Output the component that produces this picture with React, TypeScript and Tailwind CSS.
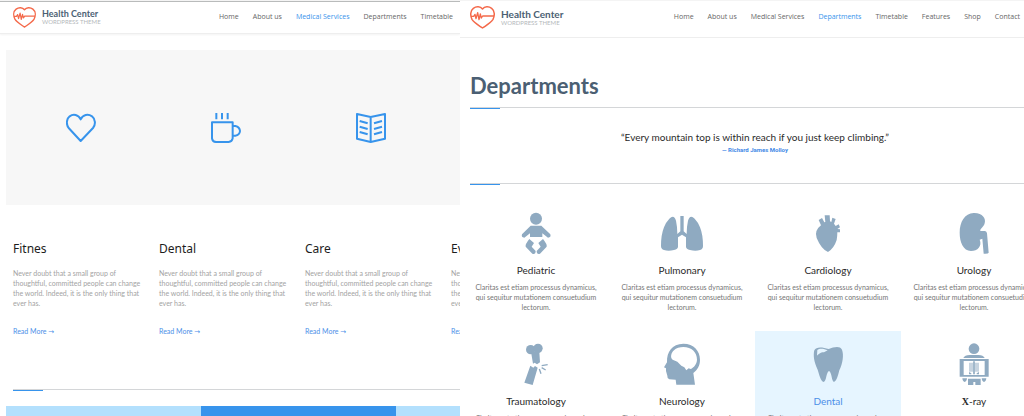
import type { ReactNode } from "react";

function Logo({ large = false }: { large?: boolean }) {
  return (
    <a href="#home" className="flex shrink-0 items-center gap-[6px]">
      <svg
        viewBox="0 0 75 69"
        fill="none"
        stroke="#f4694a"
        strokeWidth="4.5"
        strokeLinejoin="round"
        className={large ? "h-[23px] w-[25px]" : "h-[21px] w-[23px]"}
        aria-hidden="true"
      >
        <path d="M37.500 66 C26 58 12 50 6 40 C0 28 1 14 10 7 C19 0 31 1 37.500 9 C44 1 56 0 65 7 C74 14 75 28 69 40 C63 50 49 58 37.500 66 Z" />
        <path d="M3 31 H11 L15 25 L18 38 L23 20 L27 41 L31 24 L34 36 L38 30 H72" strokeWidth="4" />
      </svg>
      <span className="flex flex-col font-[Lato,sans-serif]">
        <span className={large ? "text-[10px] leading-[10px] font-bold text-[#4b5f73]" : "text-[9px] leading-[9px] font-bold text-[#4b5f73]"}>
          Health Center
        </span>
        <span className="text-[6px] leading-[8px] text-[#b4b8bb]">WORDPRESS THEME</span>
      </span>
    </a>
  );
}

function Nav({ items, active }: { items: string[]; active: string }) {
  return (
    <nav className="ml-auto flex gap-[14px] pb-[2px] text-[7px] leading-[10px] whitespace-nowrap">
      {items.map((item) => (
        <a key={item} href="#nav" className={item === active ? "text-[#3794ec]" : "text-[#666666]"}>
          {item}
        </a>
      ))}
    </nav>
  );
}

function Divider() {
  return (
    <div className="border-t border-[#d4d6d8]">
      <div className="h-px w-[30px] bg-[#3794ec]" />
    </div>
  );
}

function LineIcon({ children }: { children: ReactNode }) {
  return (
    <svg viewBox="0 0 90 90" fill="none" stroke="#3794ec" strokeWidth="6" strokeLinejoin="round" className="size-[30px]" aria-hidden="true">
      {children}
    </svg>
  );
}

const featureIcons = [
  <LineIcon key="heart">
    <path d="M44 84 L8 45 C0 34 1 18 11 10 C22 2 37 5 44 19 C51 5 66 2 78 10 C88 18 90 34 81 45 Z" />
  </LineIcon>,
  <LineIcon key="cup">
    <path d="M3 28 H65 V76 Q63 86 53 87 H15 Q4 86 3 76 Z M65 39 H73 Q86 42 87 54 Q86 66 73 68 H65 M16 0 V19 M33 0 V19 M50 0 V19" />
  </LineIcon>,
  <LineIcon key="book">
    <path d="M44 12 L3 3 V77 L44 87 L87 77 V3 Z M44 12 V87" />
    <path d="M11 24 L35 31 M11 41 L35 48 M11 57 L35 64 M78 24 L54 31 M78 41 L54 48 M78 57 L54 64" />
  </LineIcon>,
];

const features = ["Fitnes", "Dental", "Care", "Event"];

function MedicalServices() {
  return (
    <section className="min-w-0 overflow-hidden border-t border-[#f4f4f4]">
      <header className="flex h-[33px] items-center border-t border-b border-t-[#b9bbbb] border-b-[#eeeeee] pr-[7px] pl-[13px] shadow-[0_1px_2px_#f3f3f3]">
        <Logo />
        <Nav items={["Home", "About us", "Medical Services", "Departments", "Timetable"]} active="Medical Services" />
      </header>
      <div className="pl-[6px]">
        <div className="mt-4 grid h-[155px] auto-cols-[145px] grid-flow-col items-center justify-items-center bg-[#f7f7f7] pl-[2px]">
          {featureIcons}
        </div>
        <div className="pl-[7px]">
          <div className="grid auto-cols-[146px] grid-flow-col pt-[34px]">
            {features.map((name) => (
              <article key={name} className="pr-[14px]">
                <h2 className="font-['Noto_Sans',sans-serif] text-[12px] leading-[20px] text-[#1d1d1d]">{name}</h2>
                <p className="mt-[9px] font-[Lato,sans-serif] text-[7px] leading-[10px] text-[#a3a3a3]">
                  Never doubt that a small group of thoughtful, committed people can change the world. Indeed, it is the only thing that ever has.
                </p>
                <a href="#more" className="mt-[18px] block font-[Lato,'DejaVu_Sans',sans-serif] text-[7px] leading-[10px] text-[#4d8fe8]">
                  Read More <span className="font-['DejaVu_Sans',sans-serif]">→</span>
                </a>
              </article>
            ))}
          </div>
          <div className="mt-[52px]">
            <Divider />
          </div>
        </div>
        <div className="mt-[15px] grid h-[40px] auto-cols-[195px] grid-flow-col">
          <div className="bg-[#b3e0fd]" />
          <div className="bg-[#3794ec]" />
          <div className="bg-[#b3e0fd]" />
        </div>
      </div>
    </section>
  );
}

const departments: { name: ReactNode; id: string; box: string; art: ReactNode; highlighted?: boolean }[] = [
  {
    id: "pediatric",
    name: "Pediatric",
    box: "130 36 132 132",
    art: (
      <>
        <circle cx="196" cy="56" r="18" />
        <path d="M180 77 H212 L239 103 Q242 113 232 113 L215 100 V111 H178 V100 L161 113 Q151 113 154 103 Z" />
        <path d="M176 117 L190 129 L183 140 L195 153 Q195 164 185 161 L165 140 Q163 133 176 117 Z M217 117 L203 129 L210 140 L198 153 Q198 164 208 161 L228 140 Q230 133 217 117 Z" />
      </>
    ),
  },
  {
    id: "pulmonary",
    name: "Pulmonary",
    box: "570 36 132 132",
    art: (
      <path d="M598 56 Q612 42 618 62 Q622 80 622 102 L631 94 V48 H641 V94 L650 102 Q650 80 654 62 Q660 42 674 56 Q684 66 690 82 Q699 104 699 138 Q699 147 690 150 Q677 154 660 150 Q648 147 648 140 V112 L636 104 L624 112 V140 Q624 147 612 150 Q595 154 582 150 Q573 147 573 138 Q573 104 582 82 Q588 66 598 56 Z" />
    ),
  },
  {
    id: "cardiology",
    name: "Cardiology",
    box: "168 36 132 132",
    art: (
      <path d="M213 76 L206 60 L216 54 L223 67 L226 66 L224 46 H239 L240 64 L244 66 L247 53 L257 57 L252 71 L257 78 L266 73 L270 82 L262 87 L270 88 V97 L262 97 Q262 110 260 120 Q252 145 234 156 Q214 148 200 114 Q192 92 213 76 Z" />
    ),
  },
  {
    id: "urology",
    name: "Urology",
    box: "607 36 132 132",
    art: (
      <path d="M672 39 C698 38 710 56 705 70 C702 82 691 86 692 93 H706 Q711 94 712 100 L717 158 Q716 162 702 161 L698 116 L690 119 C698 138 684 153 664 153 C640 152 630 126 630 98 C630 66 645 40 672 39 Z" />
    ),
  },
  {
    id: "traumatology",
    name: "Traumatology",
    box: "130 54 132 132",
    art: (
      <>
        <circle cx="180" cy="74" r="14" />
        <circle cx="202" cy="70" r="14" />
        <path d="M181 80 H206 L208 112 L199 118 L192 113 L187 116 Z M179 122 L188 128 L193 123 L201 128 L186 180 L161 173 Z" />
        <path d="M213 122 L231 119 M213 128 L225 135 M206 132 L211 146" fill="none" stroke="currentColor" strokeWidth="4" />
      </>
    ),
  },
  {
    id: "neurology",
    name: "Neurology",
    box: "570 54 132 132",
    art: (
      <path
        fillRule="evenodd"
        d="M640 56 C672 56 690 78 690 104 C690 122 682 134 670 144 L675 179 H619 L617 164 L598 163 Q591 160 592 152 L588 138 L588 130 L582 127 L591 112 C590 80 606 57 640 56 Z M640 66 C630 66 618 69 612 76 C603 84 600 98 608 104 L622 110 L634 122 L643 127 L649 136 L656 130 L662 132 C672 127 680 118 681 104 C681 82 665 66 640 66 Z"
      />
    ),
  },
  {
    id: "dental",
    name: "Dental",
    highlighted: true,
    box: "168 54 132 132",
    art: (
      <path
        fillRule="evenodd"
        d="M236 72 C252 66 270 62 276 74 C282 90 278 115 268 136 C264 152 260 168 252 171 C244 168 246 142 237 138 C228 142 230 168 221 171 C212 168 208 150 203 134 C192 112 189 90 193 76 C199 64 216 66 236 72 Z M202 75 C208 69 222 70 233 76 L222 82 C210 82 206 88 201 92 Z"
      />
    ),
  },
  {
    id: "x-ray",
    name: (
      <>
        <span className="font-['Liberation_Serif',serif] font-bold">X</span>-ray
      </>
    ),
    box: "607 54 132 132",
    art: (
      <>
        <circle cx="673" cy="71" r="16" />
        <path d="M641 99 Q645 90 660 90 H686 Q701 90 705 99 Z" />
        <path fillRule="evenodd" d="M630 102 H717 V155 H630 Z M642 108 V150 H705 V108 Z" />
        <path d="M673 109 V148" fill="none" stroke="currentColor" strokeWidth="5" />
        <path d="M658 113 H670 V140 H658 Z M676 113 H688 V140 H676 Z" opacity="0.5" />
        <path d="M658 148 V141 L665 145 V148 Z M688 148 V141 L681 145 V148 Z" />
        <path d="M638 160 H652 Q651 170 645 171 Q639 170 638 160 Z M696 160 H710 Q709 170 703 171 Q697 170 696 160 Z" />
        <path d="M655 161 H693 V180 H677 V171 H671 V180 H655 Z" />
      </>
    ),
  },
];

function Departments() {
  return (
    <section className="min-w-0 overflow-hidden border-t border-[#f4f4f4]">
      <header className="flex h-[37px] items-center border-b border-[#eeeeee] pr-1 pb-[3px] pl-[10px]">
        <Logo large />
        <Nav
          items={["Home", "About us", "Medical Services", "Departments", "Timetable", "Features", "Shop", "Contact"]}
          active="Departments"
        />
      </header>
      <div className="-mr-4 pl-[10px]">
        <h1 className="pt-[34px] pb-[7px] font-[Lato,sans-serif] text-[22px] leading-[28px] font-bold text-[#4b5f73]">Departments</h1>
        <Divider />
        <figure className="pt-[21px] pb-[28px] text-center">
          <blockquote className="font-[Lato,sans-serif] text-[10px] leading-[15px] text-[#2a2a2a]">
            “Every mountain top is within reach if you just keep climbing.”
          </blockquote>
          <figcaption className="font-[Roboto,sans-serif] text-[6px] leading-[10px] font-bold text-[#3f88e6]">— Richard James Molloy</figcaption>
        </figure>
        <Divider />
      </div>
      <div className="grid grid-cols-[repeat(4,146px)] pt-[15px] pl-[3px]">
        {departments.map((d) => (
          <article
            key={d.id}
            className={
              d.highlighted
                ? "flex h-[131px] flex-col items-center bg-[#e6f5ff] px-2 pt-3 text-center text-[#4d8fe8]"
                : "flex h-[131px] flex-col items-center px-2 pt-3 text-center text-[#2a2a2a]"
            }
          >
            <svg viewBox={d.box} fill="currentColor" className="size-[44px] shrink-0 text-[#8faac1]" aria-hidden="true">
              {d.art}
            </svg>
            <h2 className="mt-[7px] font-[Lato,sans-serif] text-[10px] leading-[14px]">{d.name}</h2>
            <p className="mt-[5px] font-[Lato,sans-serif] text-[7px] leading-[10px] text-[#757575]">
              Claritas est etiam processus dynamicus, qui sequitur mutationem consuetudium lectorum.
            </p>
          </article>
        ))}
      </div>
    </section>
  );
}

export default function App() {
  return (
    <main className="grid h-screen grid-cols-[115fr_141fr] overflow-hidden bg-white font-['Open_Sans',sans-serif]">
      <MedicalServices />
      <Departments />
    </main>
  );
}
